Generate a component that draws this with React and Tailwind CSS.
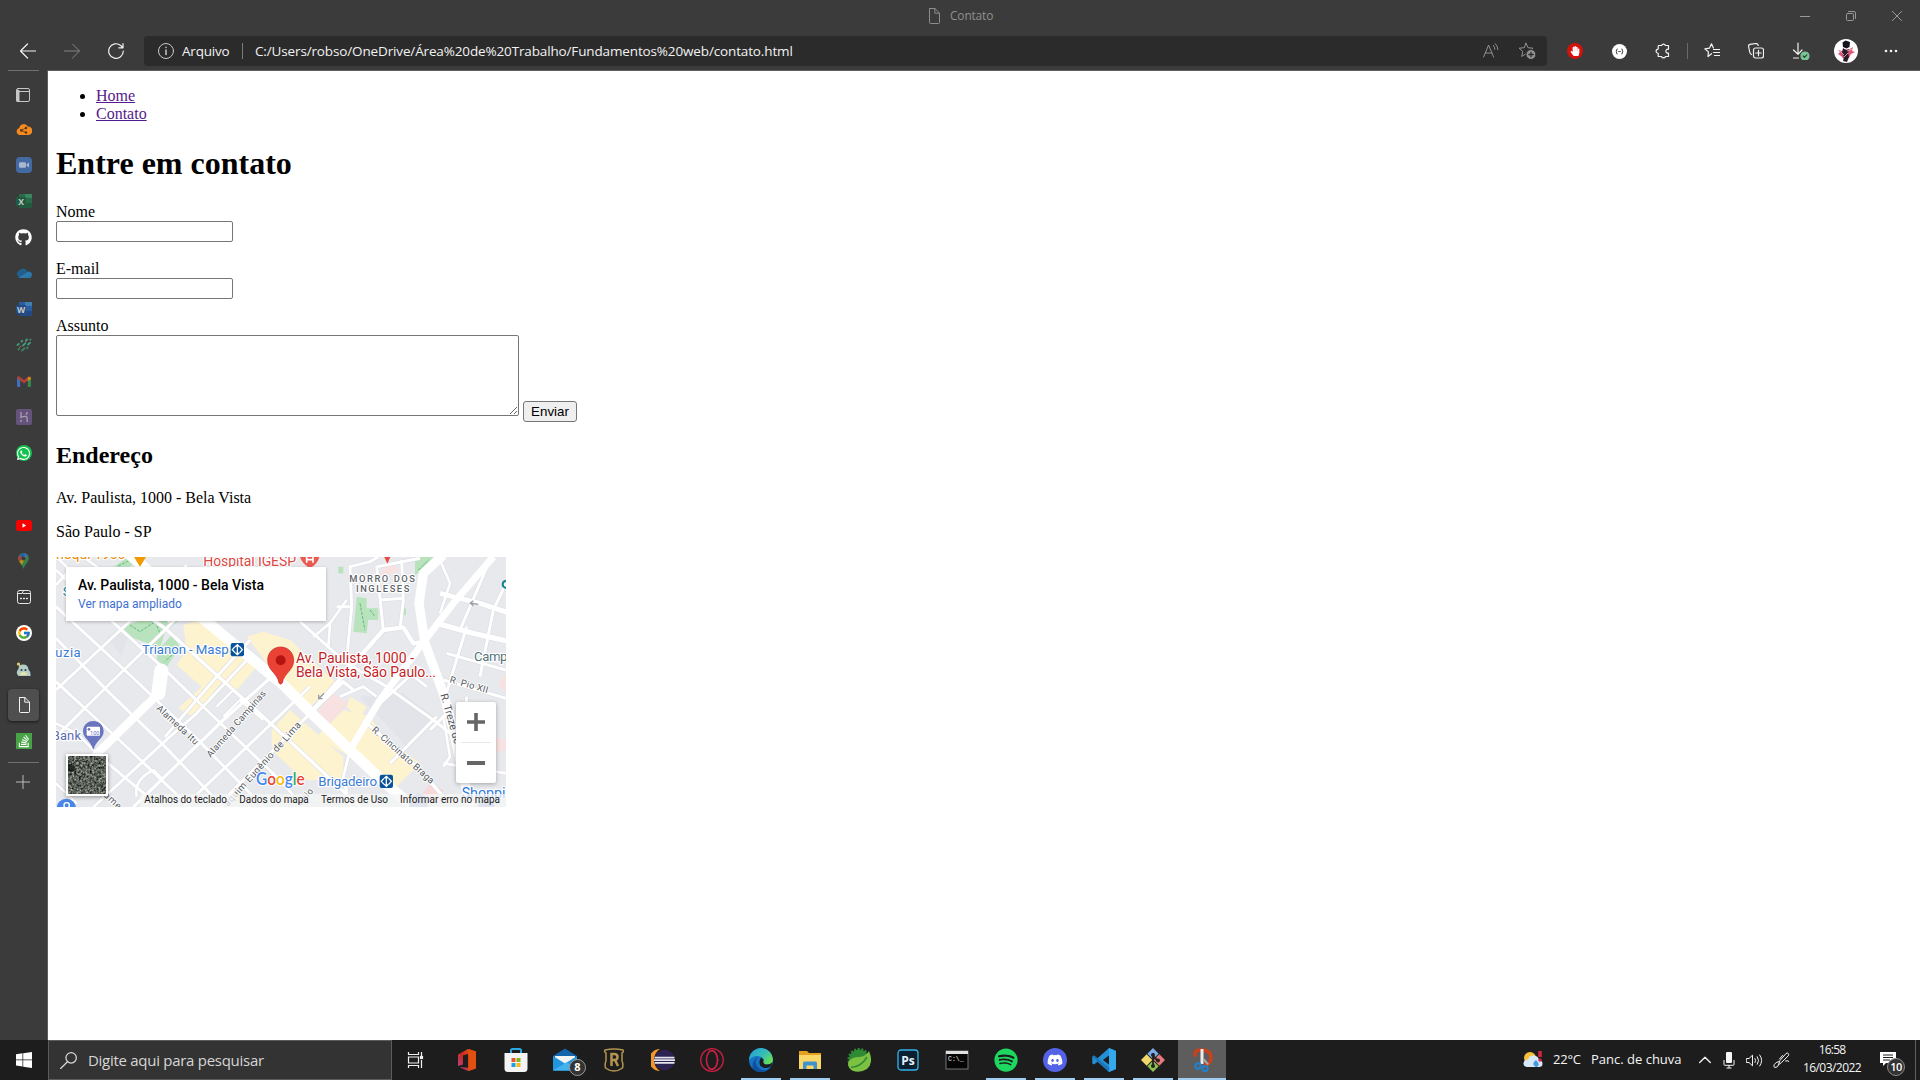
import React from "react";
import { FaGithub, FaWhatsapp, FaSpotify, FaDiscord, FaStackOverflow, FaHandPaper } from "react-icons/fa";
import { FcGoogle } from "react-icons/fc";

function Line({ size = 16, box = 16, sw = 1, className = "", children }) {
  return (
    <svg width={size} height={size} viewBox={`0 0 ${box} ${box}`} fill="none" stroke="currentColor" strokeWidth={sw} strokeLinecap="round" strokeLinejoin="round" className={`shrink-0 ${className}`}>
      {children}
    </svg>
  );
}

function PageIcon({ className }) {
  return (
    <Line className={className}>
      <path d="M3.500.5h5.400l4.600 4.600v9.400a1 1 0 0 1-1 1h-8a1 1 0 0 1-1-1v-13a1 1 0 0 1 1-1zM8.800.6v4.600h4.600" />
    </Line>
  );
}

/* ---------- title bar and toolbar ---------- */

function TitleBar() {
  return (
    <div className="flex h-8 items-start">
      <div className="flex flex-1 items-center pl-[926px] pt-2 text-[#8e8e8e]">
        <PageIcon />
        <span className="ml-[8px] font-['Open_Sans',sans-serif] text-[12px] leading-4 tracking-[-0.2px]">Contato</span>
      </div>
      <div className="flex text-[#999]">
        <div className="flex h-8 w-[46px] items-center justify-center"><Line size={10} box={10}><path d="M0 5.500h10" /></Line></div>
        <div className="flex h-8 w-[46px] items-center justify-center">
          <Line size={10} box={10}><rect x=".5" y="2.500" width="7" height="7" rx="1" /><path d="M2.500.5H8a1.500 1.500 0 0 1 1.500 1.500v5.500" /></Line>
        </div>
        <div className="flex h-8 w-[46px] items-center justify-center"><Line size={10} box={10}><path d="M.3.3l9.400 9.400M9.700.3L.3 9.700" /></Line></div>
      </div>
    </div>
  );
}

function Cell({ children, className = "w-11" }) {
  return <div className={`flex shrink-0 items-center justify-center ${className}`}>{children}</div>;
}

const STAR = "M8 1.200l2 4.500 4.900.5-3.700 3.300 1.100 4.900L8 11.900l-4.300 2.500 1.100-4.900L1.100 6.200 6 5.700z";

function Toolbar() {
  return (
    <div className="flex h-[38px] items-center text-[#f2f2f2]">
      <div className="flex w-[144px] shrink-0 pl-[6px]">
        <Cell className="w-[44px]"><Line sw={1.2}><path d="M15.500 8H.7M7.500 1L.5 8l7 7" /></Line></Cell>
        <Cell className="w-[44px]"><Line className="text-[#858585]"><path d="M.5 8h14.800M8.500 1l7 7-7 7" /></Line></Cell>
        <Cell className="w-[44px]"><Line sw={1.2}><path d="M15.300 8A7.300 7.300 0 1 1 12.700 2.500L14.800 4.500M15 .6v4.200h-4.200" /></Line></Cell>
      </div>
      <div className="flex h-[30px] w-[1403px] shrink-0 items-center rounded bg-[#2b2b2b] pl-[14px] font-['Open_Sans',sans-serif] text-[13.500px]">
        <Line className="text-[#c8c8c8]"><circle cx="8" cy="8" r="7.500" /><path d="M8 7v4.500" strokeWidth="1.500" /><path d="M8 4.200v.3" strokeWidth="1.500" /></Line>
        <span className="ml-2 w-[48px] whitespace-nowrap text-[13.5px] tracking-[-0.2px]">Arquivo</span>
        <span className="ml-3 h-4 w-px bg-[#7a7a7a]" />
        <span className="ml-[12px] whitespace-nowrap text-[13.5px] tracking-[-0.14px]">C:/Users/robso/OneDrive/Área%20de%20Trabalho/Fundamentos%20web/contato.html</span>
        <div className="ml-auto flex pr-[2px] text-[#929292]">
          <Cell className="w-9">
            <Line><path d="M.6 14L5.600 2l5 12M2.300 10h6.600M10.300 2.300a5 5 0 0 1 1.500 4M12.200.6a8 8 0 0 1 2.700 6" /></Line>
          </Cell>
          <Cell className="w-9">
            <Line size={18} box={18}>
              <path d={STAR} />
              <circle cx="13" cy="12.500" r="5" fill="#929292" stroke="#2b2b2b" /><path d="M13 10.300v4.400M10.800 12.500h4.400" stroke="#2b2b2b" strokeWidth="1.300" />
            </Line>
          </Cell>
        </div>
      </div>
      <div className="flex items-center pl-[6px]">
        <Cell>
          <span className="flex size-4 items-center justify-center rounded-full bg-[#d3120d] text-[10px] text-white"><FaHandPaper /></span>
        </Cell>
        <Cell>
          <span className="flex size-[15px] items-center justify-center rounded-full bg-white text-[#333]">
            <Line size={11} box={11}><path d="M3 3Q1.300 5.500 3 8M8 3q1.700 2.500 0 5" /><path d="M4.500 5.500h2" strokeWidth=".8" /></Line>
          </span>
        </Cell>
        <Cell>
          <Line sw={1.2}><path d="M4 2.500h2.600a2 2 0 0 1 3.800 0H13.500v3.800a2 2 0 1 0 0 3.800v3.400h-3a2.100 2.100 0 0 1-4 0H3.200v-3.200a2.100 2.100 0 1 1 0-4.200V3.300q0-.8.800-.8z" /></Line>
        </Cell>
        <span className="ml-[2px] h-4 w-px bg-[#6a6a6a]" />
        <Cell className="ml-[2px] w-11">
          <Line sw={1.2}><path d="M7.500 10.700l-3.500 2.800.4-4.600L.8 5.800l4.600-.6L7.500.8l1.900 4.100M9.500 6.500h6M9.500 9.500h6M10.500 12.500h5" /></Line>
        </Cell>
        <Cell>
          <Line sw={1.2}><rect x="5.500" y="5" width="10" height="10" rx="2" /><path d="M10.500 7.300v5.400M7.800 10h5.400M3.500 11.500Q2 10.700 1.700 9L.6 3.500Q.3 1.700 2 1.300L8 .5q1.700 0 2.300 2" /></Line>
        </Cell>
        <Cell className="w-[45px]">
          <Line size={18} box={18} sw={1.2}>
            <path d="M6 1v11M1.500 8L6 12.300 10 8M1.500 16h5" />
            <circle cx="13" cy="14" r="4" fill="#7cc596" stroke="#7cc596" /><path d="M11.200 14l1.300 1.300 2.300-2.500" stroke="#1f4a2c" />
          </Line>
        </Cell>
        <Cell className="w-[45px]">
          <svg width="24" height="24" viewBox="0 0 24 24">
            <circle cx="12" cy="12" r="12" fill="#fff" />
            <path d="M8.500 3.500l3-2 4.500 1.500-.5 5-3 1.500-3.500-1.500z" fill="#15141c" />
            <path d="M4 11l4 1 2-2 4 1 5-3-1 4 3 1-4 2-2 4-5 1-3-3-3-2 2-2z" fill="#e0557a" />
            <path d="M9 9l3 2 3-1-1 4 1 4-2 5-4-1 1-4-2-4z" fill="#2a1d29" />
            <path d="M6 12l4 4M13 12l5-2M10 18l4-4" stroke="#f9bccb" strokeWidth=".8" />
          </svg>
        </Cell>
        <Cell className="w-[46px]">
          <svg width="14" height="4" viewBox="0 0 14 4" fill="#f2f2f2"><circle cx="2" cy="2" r="1.300" /><circle cx="7" cy="2" r="1.300" /><circle cx="12" cy="2" r="1.300" /></svg>
        </Cell>
      </div>
    </div>
  );
}

/* ---------- vertical tabs ---------- */

function OfficeTab({ letter, dark, mid, light }) {
  return (
    <svg width="16" height="16" viewBox="0 0 16 16">
      <path d="M3 1h13v14H3z" fill={mid} />
      <path d="M9 1h7v4H9z" fill={light} />
      <path d="M9 10h7v5H3v-2z" fill={dark} />
      <rect y="4" width="10" height="9" rx="1" fill={dark} />
      <text x="5" y="11.500" fontSize="8.500" fontWeight="700" textAnchor="middle" fill="#c3ccc8" fontFamily="Open Sans, sans-serif">{letter}</text>
    </svg>
  );
}

function Gmail() {
  return (
    <svg width="14" height="11" viewBox="0 0 14 11" className="opacity-70">
      <path d="M0 1.500L3.200 4v7H1a1 1 0 0 1-1-1z" fill="#4285f4" />
      <path d="M14 1.500L10.800 4v7H13a1 1 0 0 0 1-1z" fill="#34a853" />
      <path d="M0 1.300Q.8-.5 2.500.5L7 4l4.500-3.500Q13.200-.5 14 1.300L14 2 7 7.500 0 2z" fill="#e24335" />
      <path d="M10.800 1L14 1.500V3l-3.200 2.200z" fill="#fbbc04" />
    </svg>
  );
}

const tabIcons = [
  <Line key="panel" size={14} box={14} className="mr-[2px] mt-1 text-[#c6c6c6]"><rect x=".5" y=".5" width="13" height="13" rx="1.500" /><path d="M.5 3.500h13" /><path d="M2 3v10" strokeWidth="3" /></Line>,
  <svg key="cloud" width="16" height="11" viewBox="0 0 16 11">
    <path d="M4 11a3.500 3.500 0 0 1-.7-6.900A4.500 4.500 0 0 1 11.800 2.600 4 4 0 0 1 12.500 11z" fill="#f68a1e" />
    <path d="M5 6.500l5-2.500M5 6.500l5 2" stroke="#5b3a18" strokeWidth=".8" /><g fill="#5b3a18"><circle cx="5.300" cy="6.400" r="1.300" /><circle cx="10" cy="4" r="1.300" /><circle cx="10" cy="8.500" r="1.300" /></g>
  </svg>,
  <svg key="zoom" width="16" height="16" viewBox="0 0 16 16"><rect width="16" height="16" rx="4" fill="#446aa3" /><rect x="3" y="5.200" width="7" height="5.600" rx="1.200" fill="#a9b8cf" /><path d="M10.600 7.200L13 5.500v5l-2.400-1.700z" fill="#a9b8cf" /></svg>,
  <OfficeTab key="x" letter="X" dark="#215a3e" mid="#2a6b4a" light="#3a8660" />,
  <FaGithub key="gh" className="text-[17px] text-white" />,
  <svg key="od" width="16" height="10" viewBox="0 0 16 10"><path d="M2.500 8.500A3 3 0 0 1 2.600 3 5 5 0 0 1 11.400 3.200L15.500 7Q15.500 10 13 10H3z" fill="#215f8d" /><path d="M2.500 9.500L11.500 4a3 3 0 0 1 4.300 3.500Q15.500 10 13 10H4z" fill="#2d79ab" /></svg>,
  <OfficeTab key="w" letter="W" dark="#244a85" mid="#2b5ea0" light="#3f7fb5" />,
  <svg key="dots" width="16" height="14" viewBox="0 0 16 14" strokeWidth="1.900" strokeLinecap="round">
    <path d="M5.500 3.500l.8-.7M10 2.300l1-.9M1.500 7l1.300-1.100M7 7.500l2.200-2.200M12 6.500l2-1.800" stroke="#3e9a80" />
    <path d="M2.500 11.500l.6-.5M6 12.500l2.500-2.200M11 10.200l.8-.7M14 1.800l.5-.4" stroke="#3f8069" />
    <path d="M3.500 9.500L5 8.200M9.500 4l1.500-1.400" stroke="#a8803c" strokeWidth="1" />
  </svg>,
  <Gmail key="gm" />,
  <svg key="hk" width="16" height="16" viewBox="0 0 16 16"><rect width="16" height="16" rx="2" fill="#65537b" /><path d="M5 3v5.300q3-1.300 5-.8 1.200.4 1.200 2V13M11.200 3q0 1.500-1.200 2.800M5 10.800V13" fill="none" stroke="#a59bb2" strokeWidth="1.400" /></svg>,
  <span key="wa" className="flex size-4 items-center justify-center rounded-full bg-[#12c24d] text-[15px] text-white"><FaWhatsapp /></span>,
  <svg key="faint" width="14" height="6" viewBox="0 0 14 6"><path d="M1 2h4M2 4h2M8 1l4 4" stroke="#353941" strokeWidth="1" /></svg>,
  <svg key="yt" width="16" height="11" viewBox="0 0 16 11"><rect width="16" height="11" rx="2.500" fill="#f60000" /><path d="M6.500 3.200v4.600l3.700-2.300z" fill="#fff" /></svg>,
  <svg key="maps" width="11" height="16" viewBox="0 0 11 16" className="opacity-65">
    <path d="M5.500 0A5.300 5.300 0 0 1 10.800 5.500C10.800 9 7 11 5.500 16 4 11 .2 9 .2 5.500A5.300 5.300 0 0 1 5.500 0z" fill="#34a853" />
    <path d="M5.500 0A5.300 5.300 0 0 1 10 2.500L5.500 6z" fill="#4285f4" /><path d="M5.500 0L1 3l4 2.500L7 1z" fill="#1a73e8" /><path d="M1.200 2.500L5 5.500 1.500 9Q-.8 5.500 1.200 2.500z" fill="#ea4335" /><path d="M1.200 8.500L8 3 4 12z" fill="#fbbc04" /><circle cx="5.500" cy="5.500" r="2" fill="#3b3b3b" />
  </svg>,
  <Line key="cal" size={14} box={14} className="text-[#e6e6e6]"><rect x=".5" y=".5" width="13" height="13" rx="2" /><path d="M.5 3.500H5L6.500.7M6 3.500h7.500" /><path d="M3.700 8.500h.6M6.700 8.500h.6M9.700 8.500h.6" strokeWidth="1.600" /></Line>,
  <span key="g" className="flex size-4 items-center justify-center rounded-full bg-white text-[14px]"><FcGoogle /></span>,
  <svg key="duck" width="15" height="15" viewBox="0 0 15 15">
    <path d="M2.500 7Q2.500 2.500 7 2.500q5 0 5.500 5 2.500 2.500 2 6.500H2.500Q-1 10.500 2.500 7z" fill="#b3cdc8" />
    <circle cx="2.500" cy="2" r="1.600" fill="#e2d173" /><path d="M3 3l2 2.500" stroke="#e2d173" />
    <path d="M4 11.500q3.500-3 7 0l-1 1.500H5z" fill="#efe3a0" /><circle cx="5.500" cy="8" r="1.100" fill="#39434a" /><circle cx="9.500" cy="8" r="1.100" fill="#39434a" />
  </svg>,
  <PageIcon key="page" className="text-[#f5f5f5]" />,
  <span key="so" className="flex size-4 items-center justify-center bg-[#48a347] text-[14px] text-white"><FaStackOverflow /></span>,
];

function SideTabs() {
  return (
    <aside className="flex w-12 shrink-0 flex-col items-center border-r border-[#5e5e5e]">
      <div className="h-px w-[31px] bg-[#707070]" />
      <div className="mt-1 flex flex-col items-center">
        {tabIcons.map((icon, i) => (
          <div key={i} className="flex h-9 items-center">
            <div className={i === 17 ? "flex h-8 w-[31px] items-center justify-center rounded bg-[#4f4f4f] shadow-[0_1px_3px_rgba(0,0,0,0.6)]" : "flex h-8 w-[31px] items-center justify-center"}>{icon}</div>
          </div>
        ))}
      </div>
      <div className="mt-[3px] h-px w-[31px] bg-[#707070]" />
      <Line size={14} box={14} className="mr-[2px] mt-3 text-[#bcbcbc]"><path d="M7 0v14M0 7h14" /></Line>
    </aside>
  );
}

/* ---------- map ---------- */

const roads = [
  ["M18 60L160 190 335 350 470 480 690 690 760 771", 9],
  ["M18 170L240 375 440 565 640 771", 9],
  ["M18 265L180 430 330 575 520 771", 9],
  ["M18 395L110 480 240 600 420 771", 9],
  ["M150 620L330 771", 9],
  ["M200 130L345 235 500 375 640 500 780 630 930 771", 10],
  ["M100 21L250 130 360 215", 8],
  ["M18 420L260 195 410 45", 9],
  ["M18 560L160 420 345 240 450 130", 9],
  ["M345 560L500 380 600 270", 9],
  ["M130 771L360 560 440 490 600 320", 9],
  ["M250 771L520 510 660 385", 10],
  ["M400 771L560 620 780 410", 9],
  ["M500 771L780 490 880 395 910 420", 10],
  ["M18 700L80 760M18 20L60 60 18 105", 8],
  ["M150 620L80 550 18 520M260 740Q250 690 310 660L340 690", 8],
  ["M500 470L550 420 590 460M520 500L570 450 640 510", 7],
  ["M780 490L1000 240 1060 232 1090 280 1125 275", 13],
  ["M750 215L890 340 1010 410 1150 510 1290 620", 9],
  ["M790 260L840 220 890 150M840 220L835 290", 8],
  ["M860 170L905 170 890 330M905 170L900 50 960 35 985 21", 9],
  ["M980 50L1000 240M1055 30L1060 150 1050 235M990 150L1060 145M980 50L1110 25", 9],
  ["M870 440L940 410 980 440M1080 370L1130 410M980 470L1110 350", 9],
  ["M940 510L1100 650 1180 740", 10],
  ["M900 600L880 680 900 771M1020 640L1160 500", 9],
  ["M1170 130L1290 160 1380 190", 15],
  ["M1160 220L1270 250 1380 275", 16],
  ["M1230 240L1320 30M1290 380L1330 180M1250 230L1180 460M1330 180L1368 100", 9],
  ["M1190 310L1368 360M1180 390L1368 445M1250 440L1240 560M1140 540L1190 490M1180 640L1368 670", 9],
  ["M1170 30L1200 100 1170 190M1180 500L1200 620 1180 650", 8],
];

function Street({ x, y, r, w, children, size = 28 }) {
  return (
    <text transform={`translate(${x} ${y}) rotate(${r})`} fontSize={size} textLength={w} fill="#555a60" stroke="#fff" strokeWidth="5" paintOrder="stroke">{children}</text>
  );
}

function MapDrawing() {
  return (
    <svg width="450" height="250" viewBox="18 21 1350 750" className="block" fontFamily="Roboto, sans-serif">
      <rect x="18" y="21" width="1350" height="750" fill="#e8e9ec" />
      <g fill="#fdf3cf">
        <path d="M400 225L470 205 560 290 620 350 560 420 520 390 430 500 385 475 455 410 380 345 410 300z" />
        <path d="M590 260L640 245 720 270 860 400 780 470 690 390z" />
        <path d="M665 540L720 480 880 620 880 690 760 690 665 600z" />
        <path d="M800 560L880 480 960 500 1000 560 1110 640 1030 720 900 620z" />
        <path d="M900 440L950 470 930 510 890 470z" />
      </g>
      <path d="M800 490L845 430 895 460 840 520zM980 90L1015 30 1050 60zM1345 400L1368 370V430zM1330 560L1368 570V600L1330 610z" fill="#f8e1e1" />
      <path d="M1110 740l30-40 40 20-10 40z" fill="#f8d9d9" />
      <path d="M170 260L240 245 215 320zM930 440L1060 430 1150 500 1070 590z" fill="#e3e4e9" />
      <g fill="#b8e3bd">
        <path d="M190 50L235 21H285L240 50zM215 232L300 200H400L345 245 330 295 245 262z" />
        <path d="M325 300L365 255 390 290 350 350 320 330z" />
        <path d="M920 140L950 145 950 175 985 175 985 210 955 210 950 250 910 245zM1095 21H1150L1120 60 1095 75zM865 50h15v20h-15zM1060 175h8v20h-8z" />
      </g>
      <path d="M240 225L270 245 315 215 330 250M345 290L370 310 345 335M930 160L945 240M960 180L975 200M1105 60L1135 30M205 48L250 25" fill="none" stroke="#63b878" strokeWidth="3" strokeDasharray="9 4" />
      <g fill="none" stroke="#d9dbe0" strokeLinejoin="round">
        {roads.map(([d, w], i) => <path key={i} d={d} strokeWidth={w + 3} />)}
      </g>
      <g fill="none" stroke="#fff" strokeLinejoin="round">
        {roads.map(([d, w], i) => <path key={i} d={d} strokeWidth={w} />)}
        <path d="M200 -20L470 215 700 405 790 495 900 600 1000 695 1090 771" strokeWidth="32" />
        <path d="M338 365Q335 430 290 465L140 612" strokeWidth="25" strokeLinecap="round" />
        <path d="M334 362L325 430" strokeWidth="42" strokeLinecap="round" />
        <path d="M900 600L990 450 1125 270 1210 160 1330 20" strokeWidth="21" />
        <path d="M1180 15L1120 70 1107 160 1125 280 1180 430 1210 540 1260 771" strokeWidth="28" />
      </g>
      <path d="M822 430l-16 16m0-12v12h12M1285 163l-24-4m9-7l-9 7 9 8" fill="none" stroke="#9a9da3" strokeWidth="4" />

      <Street x="318" y="477" r="43" w="160">Alameda Itu</Street>
      <Street x="482" y="624" r="-49" w="255">Alameda Campinas</Street>
      <Street x="534" y="771" r="-48" w="330" size={29}>aquim Eugênio de Lima</Street>
      <Street x="964" y="542" r="42" w="240">R. Cincinato Braga</Street>
      <Street x="1198" y="397" r="16" w="118">R. Pio XII</Street>
      <Street x="1171" y="434" r="74" w="155" size={32}>R. Treze de</Street>
      <Street x="160" y="738" r="43" w="60">ame</Street>
      <Street x="753" y="768" r="-48" w="58">ônio</Street>

      <g stroke="#fff" strokeWidth="7" paintOrder="stroke" strokeLinejoin="round">
        <text x="18" y="26" fontSize="42" fill="#e88b0c" textLength="208">noqui 1900</text>
        <text x="460" y="49" fontSize="42" fill="#dc4a45" textLength="278">Hospital IGESP</text>
        <text x="38" y="138" fontSize="38" fill="#168394">S</text>
        <text x="16" y="320" fontSize="39" fill="#3a7bd5" textLength="76">uzia</text>
        <text x="276" y="313" fontSize="40" fill="#3a7bd5" textLength="260">Trianon - Masp</text>
        <text x="805" y="709" fontSize="40" fill="#3a7bd5" textLength="176">Brigadeiro</text>
        <text x="5" y="571" fontSize="39" fill="#5d6bb0" textLength="88">Bank</text>
        <text x="1272" y="332" fontSize="40" fill="#53727a" textLength="122">Campo</text>
        <text x="1235" y="744" fontSize="43" fill="#2d7be0" textLength="155">Shoppin</text>
        <g fontSize="28" fill="#5e6369" fontWeight="500">
          <text x="898" y="97" textLength="197">MORRO DOS</text>
          <text x="918" y="127" textLength="160">INGLESES</text>
        </g>
        <g fontSize="42" fill="#c42126">
          <text x="738" y="339" textLength="354">Av. Paulista, 1000 -</text>
          <text x="738" y="382" textLength="420">Bela Vista, São Paulo...</text>
        </g>
      </g>

      <g fill="#07549b">
        <rect x="542" y="279" width="40" height="40" rx="6" />
        <rect x="989" y="674" width="40" height="40" rx="6" />
      </g>
      <path d="M562 284v30M555 290l-8 9 8 9M569 290l8 9-8 9M556 290l6-6 6 6M556 308l6 6 6-6M1009 679v30M1002 685l-8 9 8 9M1016 685l8 9-8 9M1003 685l6-6 6 6M1003 703l6 6 6-6" fill="none" stroke="#fff" strokeWidth="4" />
      <path d="M252 21h36l-18 29z" fill="#f29900" />
      <path d="M1003 21h18l-9 20z" fill="#e64a45" />
      <path d="M750 21h58Q803 43 780 54 757 43 750 21z" fill="#ea5a52" />
      <path d="M770 21v17M789 21v17M770 29h19" stroke="#fff" strokeWidth="5" />
      <path d="M1368 92q-10 2-10 11t10 11" fill="none" stroke="#168394" strokeWidth="6" />

      <path d="M692 291c22 0 39 17 39 40 0 31-30 39-34 68q-5 7-10 0c-4-29-34-37-34-68 0-23 17-40 39-40z" fill="#ea4335" stroke="#c5221f" strokeWidth="2" />
      <circle cx="692" cy="331" r="15" fill="#b31412" />

      <path d="M130 513c18 0 31 13 31 31 0 22-22 26-31 56-9-30-31-34-31-56 0-18 13-31 31-31z" fill="#6b74bf" />
      <rect x="110" y="530" width="40" height="27" rx="3" fill="#fff" />
      <text x="120" y="554" fontSize="17" fill="#6b74bf">100</text>
      <circle cx="117" cy="538" r="4" fill="#6b74bf" />

      <circle cx="49" cy="775" r="29" fill="#4a86e8" />
      <circle cx="50" cy="766" r="8" fill="none" stroke="#fff" strokeWidth="4" />
      <path d="M1078 750a27 27 0 0 1 54 21h-54zM1285 765a24 24 0 0 1 48 6h-48z" fill="#9ab0dc" />

      <text x="618" y="706" fontSize="50" textLength="146" lengthAdjust="spacingAndGlyphs" fontFamily="Lato, sans-serif" fontWeight="600" stroke="#fff" strokeWidth="6" paintOrder="stroke">
        <tspan fill="#4285f4">G</tspan><tspan fill="#ea4335">o</tspan><tspan fill="#fbbc04">o</tspan><tspan fill="#4285f4">g</tspan><tspan fill="#34a853">l</tspan><tspan fill="#ea4335">e</tspan>
      </text>

      <rect x="270" y="732" width="1098" height="39" fill="#f5f5f5" opacity=".75" />
      <g fontSize="30" fill="#1c1c1c">
        <text x="283" y="758" textLength="248" lengthAdjust="spacingAndGlyphs">Atalhos do teclado</text>
        <text x="568" y="758" textLength="208" lengthAdjust="spacingAndGlyphs">Dados do mapa</text>
        <text x="813" y="758" textLength="201" lengthAdjust="spacingAndGlyphs">Termos de Uso</text>
        <text x="1050" y="758" textLength="300" lengthAdjust="spacingAndGlyphs">Informar erro no mapa</text>
      </g>
    </svg>
  );
}

function MapFrame() {
  return (
    <div className="relative h-[250px] w-[450px] overflow-hidden font-[Roboto,sans-serif]">
      <MapDrawing />
      <div className="absolute left-[10px] top-[10px] h-[54px] w-[260px] bg-white pl-3 pt-[9px] shadow-[0_1px_3px_rgba(0,0,0,0.25)]">
        <div className="whitespace-nowrap text-[14px] font-medium leading-[18px] tracking-[-0.01px] text-black">Av. Paulista, 1000 - Bela Vista</div>
        <div className="mt-px whitespace-nowrap text-[12px] leading-[19px] text-[#3e6fd0]">Ver mapa ampliado</div>
      </div>
      <div className="absolute bottom-[11px] left-[10px] border-2 border-white shadow-[0_1px_4px_rgba(0,0,0,0.4)]">
        <svg width="38" height="38" className="block">
          <filter id="ground" x="0" y="0" width="1" height="1" colorInterpolationFilters="sRGB">
            <feTurbulence type="fractalNoise" baseFrequency=".45" numOctaves="3" seed="4" />
            <feColorMatrix values="1 0 0 0 -.14  1 0 0 0 -.12  .9 .1 0 0 -.15  0 0 0 0 1" />
          </filter>
          <rect width="38" height="38" filter="url(#ground)" />
          <circle cx="3" cy="12" r="4" fill="#0b1410" opacity=".7" />
        </svg>
      </div>
      <div className="absolute right-[10px] top-[145px] flex w-10 flex-col items-center rounded-[2px] bg-white text-[#666] shadow-[0_1px_4px_rgba(0,0,0,0.3)]">
        <div className="flex h-10 items-center"><svg width="18" height="18" viewBox="0 0 18 18" fill="#666"><path d="M7.200 0h3.600v7.200H18v3.600h-7.200V18H7.200v-7.200H0V7.200h7.200z" /></svg></div>
        <div className="h-px w-[30px] bg-[#e6e6e6]" />
        <div className="flex h-10 items-center"><div className="h-1 w-[18px] bg-[#666]" /></div>
      </div>
    </div>
  );
}

/* ---------- page ---------- */

function Field({ label }) {
  return (
    <div className="mb-[18px] flex flex-col items-start">
      <label>{label}</label>
      <input className="h-[21px] w-[177px] rounded-[2px] border border-[#767676] bg-white" />
    </div>
  );
}

function ContactPage() {
  return (
    <main className="flex-1 overflow-hidden border-t border-[#5e5e5e] bg-white pl-2 font-['Liberation_Serif',serif] text-base leading-[18px] text-black">
      <ul className="mt-4 list-disc pl-10 text-[#551a8b] marker:text-black">
        <li><a className="underline">Home</a></li>
        <li><a className="underline">Contato</a></li>
      </ul>
      <h1 className="mt-[22px] text-[32px] font-bold leading-[37px]">Entre em contato</h1>
      <form className="mt-[21px]">
        <Field label="Nome" />
        <Field label="E-mail" />
        <label className="block">Assunto</label>
        <div className="flex h-[87px] items-start gap-1">
          <textarea className="block h-[81px] w-[463px] rounded-[2px] border border-[#767676] bg-white" />
          <button type="button" className="mt-[66px] h-[21px] w-[54px] rounded-[3px] border border-[#767676] bg-[#efefef] text-center font-['Liberation_Sans',sans-serif] text-[13.33px] leading-[18px]">Enviar</button>
        </div>
      </form>
      <h2 className="mt-5 text-2xl font-bold leading-[27px]">Endereço</h2>
      <p className="mt-5">Av. Paulista, 1000 - Bela Vista</p>
      <p className="mb-4 mt-4">São Paulo - SP</p>
      <MapFrame />
    </main>
  );
}

/* ---------- taskbar ---------- */

const Svg = (p) => <svg width="24" height="24" viewBox="0 0 24 24" {...p} />;

const apps = [
  { id: "tasks", icon: <Svg fill="none" stroke="#f0f0f0" strokeWidth="1.200"><path d="M4.500 4v2.500h10V4M4.500 20v-2.500h10V20M4.500 9h10v6h-10zM17.500 4v4M17.500 12v8" /><rect x="16.500" y="8.500" width="2" height="2" fill="#fff" /></Svg> },
  { id: "office", wide: true, icon: <Svg><defs><linearGradient id="off" x1="0" y1="1" x2="1" y2="0"><stop stopColor="#b9479b" /><stop offset=".5" stopColor="#c8291a" /><stop offset="1" stopColor="#ef6a1e" /></linearGradient></defs><path d="M3 6.500L13 1l8 2.500v17L13 23l-8.500-4 8.500.8V6L8 7.500v9L3 18z" fill="url(#off)" /><path d="M13.500 1L21 3.500v17L13.500 23z" fill="#e2500f" /></Svg> },
  { id: "store", icon: <Svg><path d="M7 6V2.500Q7 1 8.500 1h7Q17 1 17 2.500V6" fill="none" stroke="#2aa9e0" strokeWidth="2" /><path d="M.5 5h23v15.500Q23.500 24 20 24H4Q.5 24 .5 20.500z" fill="#f4f4f4" /><path d="M7.500 10h4v4h-4z" fill="#e8562a" /><path d="M12.500 10h4v4h-4z" fill="#82b520" /><path d="M7.500 15h4v4h-4z" fill="#1f9fe0" /><path d="M12.500 15h4v4h-4z" fill="#f5b91c" /></Svg> },
  { id: "mail", badge: "8", icon: <Svg><path d="M0 8L12 .5 24 8v14.500H0z" fill="#1464ad" /><path d="M2 8h20v8H2z" fill="#f3f3f3" /><path d="M0 8l12 7.500L24 8v14.500H0z" fill="#2296dd" /><path d="M0 22.500L14 14l10 8.500z" fill="#42b3ee" /></Svg> },
  { id: "rockstar", icon: <Svg fill="none" stroke="#b39450"><path d="M3 2q9-2 18 0 1 2-1 3v8q1.500 3 .5 7-4 3-8.500 3t-8.500-3q-1-4 .5-7V5Q2 4 3 2z" strokeWidth="1.500" /><path d="M9.500 18V6h3.300q2.700.3 2.700 3t-2.700 3H10m3 0l3 6" strokeWidth="2.500" /></Svg> },
  { id: "eclipse", icon: <Svg><path d="M9 1A11 11 0 0 0 9 23 13 13 0 0 1 9 1z" fill="#f2952a" /><circle cx="13.500" cy="12" r="10.300" fill="#2d2352" /><path d="M3.500 8.700h20v1.700h-20zM3 11.300h21V13H3zM3.500 14h20v1.700h-20z" fill="#e5e3ee" /></Svg> },
  { id: "opera", icon: <Svg fill="none" stroke="#cf1f45"><circle cx="12" cy="12" r="11.300" strokeWidth="1.300" /><ellipse cx="12" cy="12" rx="5.500" ry="9.500" strokeWidth="1.500" /><path d="M9 3q7-2 9 9-2 11-9 9" strokeWidth="1.100" /></Svg> },
  { id: "edge", open: true, icon: <Svg><defs><linearGradient id="ed" x1="0" y1="0" x2="1" y2=".6"><stop stopColor="#219ed9" /><stop offset=".6" stopColor="#36bdb8" /><stop offset="1" stopColor="#65dc59" /></linearGradient></defs><circle cx="12" cy="12" r="12" fill="#1674c4" /><path d="M.2 10A12 12 0 0 1 24 11.500q-.3 5-6 5-4.500 0-4-2.500 1.200-1.500.2-3.500-2-3-7-2.500Q2.500 8.500.2 12z" fill="url(#ed)" /><path d="M9 9q-4.500 4-1 9 4 6 12 3.300A12 12 0 0 1 4 21Q2 13 9 9z" fill="#104f9e" /><path d="M14.500 12q-1 4.500 3.500 4.600 3.500 0 5-2l-.5 3.400q-3 2.500-7 2-5.500-1.500-5-6 0-3 2-4.500z" fill="#1d1d1d" /></Svg> },
  { id: "files", open: true, icon: <Svg><path d="M1 3h8l2 2h12v15H1z" fill="#e3a021" /><path d="M1 7h22v14H1z" fill="#fbd767" /><path d="M5 21v-6q0-1.500 1.500-1.500h11q1.500 0 1.500 1.500v6h-3.500v-3.500h-7V21z" fill="#3f94cf" /></Svg> },
  { id: "spring", icon: <Svg><circle cx="12" cy="11.500" r="10" fill="#2f8a34" stroke="#2f8a34" strokeWidth="3" strokeDasharray="2 1.500" /><path d="M22 3q5 12-2 18-7 4.500-15 1.500Q-1 18 2 13q3-4 10-4 7-.5 10-6z" fill="#7cc142" /><path d="M4 19.500Q14 19 20 9" fill="none" stroke="#2f8a34" strokeWidth="1.500" /></Svg> },
  { id: "ps", icon: <Svg><rect x="2" y="2" width="20" height="20" rx="3" fill="#0c1f2f" stroke="#34b3ea" strokeWidth="1.300" /><text x="12" y="16.500" textAnchor="middle" fontSize="12" fontWeight="700" fill="#e4f3fb" fontFamily="Open Sans, sans-serif">Ps</text></Svg> },
  { id: "cmd", icon: <Svg><rect x="1" y="3" width="22" height="18" fill="#050505" stroke="#777" /><path d="M1 3h22v3H1z" fill="#dedede" /><text x="3" y="12.500" fontSize="6.500" fill="#eee" fontFamily="Liberation Mono, monospace">C:\_</text></Svg> },
  { id: "spotify", open: true, icon: <FaSpotify className="text-2xl text-[#1ed760]" /> },
  { id: "discord", open: true, icon: <span className="flex size-6 items-center justify-center rounded-full bg-[#5462e8] text-[16px] text-white"><FaDiscord /></span> },
  { id: "code", open: true, icon: <Svg><path d="M17 0l7 3v18l-7 3L5.500 13.800 2 16.500.3 15.500V8.500L2 7.500l3.500 2.700zM17.500 7L11 12l6.500 5z" fill="#2390d5" fillRule="evenodd" /><path d="M17 0l7 3v18l-7 3z" fill="#35a8ee" /><path d="M.3 8.500L2 7.500 17.500 20 17 24z" fill="#1b75b6" /></Svg> },
  { id: "git", open: true, icon: <Svg><g transform="rotate(45 12 12)"><rect x="3.500" y="3.500" width="8" height="8" fill="#7aaae8" /><rect x="12.500" y="3.500" width="8" height="8" fill="#e97a7c" /><rect x="3.500" y="12.500" width="8" height="8" fill="#f1d86b" /><rect x="12.500" y="12.500" width="8" height="8" fill="#8cc152" /></g><path d="M12 5v14M12 8l5 5" stroke="#222" strokeWidth="1.800" /><g fill="#222"><circle cx="12" cy="7" r="2" /><circle cx="17" cy="12.500" r="2" /><circle cx="12" cy="18" r="2" /></g></Svg> },
  { id: "snip", open: true, active: true, icon: <Svg fill="none"><path d="M5.500 8.500Q3 2 11 2q10 0 10 8 0 6-7 7" stroke="#c9401c" strokeWidth="3.500" /><path d="M10.500 1h3v15h-3z" fill="#ececec" /><path d="M14 10l5 6-1.500 1-5-5z" fill="#aaa" /><circle cx="8" cy="18" r="2.700" stroke="#2281cd" strokeWidth="2" /><circle cx="15" cy="20.500" r="2.600" stroke="#2281cd" strokeWidth="2" /></Svg> },
];

function TaskButton({ app }) {
  return (
    <div className={`relative flex h-10 w-12 shrink-0 items-center justify-center ${app.wide ? "ml-[3px]" : "ml-px"} ${app.active ? "bg-[#5d5d5d]" : ""}`}>
      {app.icon}
      {app.badge && <span className="absolute left-7 top-[19px] flex size-[17px] items-center justify-center rounded-full border border-[#9b9b9b] bg-[#333] font-['Open_Sans',sans-serif] text-[11px] font-bold text-white">{app.badge}</span>}
      {app.open && <span className={app.active ? "absolute bottom-0 h-0.5 w-12 bg-[#a0cdf2]" : "absolute bottom-0 h-0.5 w-10 bg-[#a0cdf2]"} />}
    </div>
  );
}

function Taskbar() {
  return (
    <footer className="flex h-10 shrink-0 bg-[#1d1d1d] font-['Open_Sans',sans-serif] text-[#f5f5f5]">
      <div className="flex w-12 items-center justify-center">
        <svg width="16" height="16" viewBox="0 0 16 16" fill="#fff"><path d="M0 2.200l6.500-.9v6.200H0zM7.200 1.200L16 0v7.500H7.200zM0 8.300h6.500v6.200L0 13.600zM7.200 8.300H16V16l-8.800-1.300z" /></svg>
      </div>
      <div className="flex w-[344px] items-center border border-[#5b5b5b] bg-[#333] pl-[11px] text-[#d6d6d6]">
        <Line size={17} sw={1.2}><circle cx="10.500" cy="5.500" r="4.900" /><path d="M7 9.200L.6 15.500" /></Line>
        <span className="ml-[11px] whitespace-nowrap text-[15px] tracking-[-0.28px]">Digite aqui para pesquisar</span>
      </div>
      <div className="-ml-px flex">{apps.map((a) => <TaskButton key={a.id} app={a} />)}</div>
      <div className="ml-auto flex items-center">
        <svg width="20" height="18" viewBox="0 0 20 18"><circle cx="7" cy="7" r="6" fill="#f5c13b" /><path d="M4 16Q0 15.500.5 12T5 8.500Q6.500 4 11 4.500T16 9q3.500.5 3.500 3.700T16 16z" fill="#d7e8f8" /><path d="M13 9q4 4 2 6t-4-.5T13 9z" fill="#4599dc" /><path d="M17 0v6" stroke="#d6263f" strokeWidth="3.500" /><circle cx="17" cy="9" r="1.700" fill="#d6263f" /></svg>
        <span className="ml-[10px] w-[30px] whitespace-nowrap pb-px text-[13px] tracking-[-0.2px]">22°C</span>
        <span className="ml-2 w-[92px] whitespace-nowrap pb-px text-[13px]">Panc. de chuva</span>
        <Cell className="ml-[10px] w-6"><Line size={12} box={12} sw={1.3}><path d="M.7 8.500L6 3.200l5.300 5.300" /></Line></Cell>
        <Cell className="w-6"><svg width="12" height="17" viewBox="0 0 12 17" fill="none" stroke="#f5f5f5"><rect x="3" y="0" width="6" height="11" rx="1" fill="#f5f5f5" stroke="none" /><path d="M1 8v4.500q0 .8.800.8h8.400q.8 0 .8-.8V8M6 13v3M3.500 16h5" /></svg></Cell>
        <Cell className="w-[26px]"><Line size={17} box={17}><path d="M.7 6.500H3l3.500-3.300v10.600L3 10.500H.7zM9 6.500q1.400 2 0 4M11.300 4.700q2.700 3.800 0 7.600M13.700 3q4 5.500 0 11" /></Line></Cell>
        <Cell className="w-[29px]"><Line size={17} box={17}><path d="M5.500 13Q4 16 2 15.500t-.7-3T6 9.500M5.500 12.500L7 8.500 13 1.500q1.500-1 2.300 0t0 2.300L8.500 10.500zM9.500 3.500L6.500 7M12.500 9q3-1 3.500.5" /></Line></Cell>
        <div className="ml-[5px] w-[62px] pb-[2px] text-center text-[12px] leading-[18px]">
          <div className="tracking-[-0.8px]">16:58</div>
          <div className="tracking-[-0.55px]">16/03/2022</div>
        </div>
        <div className="relative ml-[17px] mr-[10px] h-10 w-[25px]">
          <svg width="16" height="16" viewBox="0 0 16 16" className="mt-[11px]"><path d="M0 1h16v11H6l-3 3v-3H0z" fill="#fff" /><path d="M3 4h10M3 6.500h10M3 9h7" stroke="#1d1d1d" /></svg>
          <span className="absolute left-[7px] top-[18px] flex size-[18px] items-center justify-center rounded-full border border-[#8b8b8b] bg-[#333] text-[11px] font-semibold tracking-[-0.5px] text-white">10</span>
        </div>
        <div className="mr-1 h-10 w-px bg-[#606060]" />
      </div>
    </footer>
  );
}

export default function App() {
  return (
    <div className="flex h-[1080px] w-[1920px] flex-col overflow-hidden bg-[#3b3b3b]">
      <TitleBar />
      <Toolbar />
      <div className="flex min-h-0 flex-1">
        <SideTabs />
        <ContactPage />
      </div>
      <Taskbar />
    </div>
  );
}
